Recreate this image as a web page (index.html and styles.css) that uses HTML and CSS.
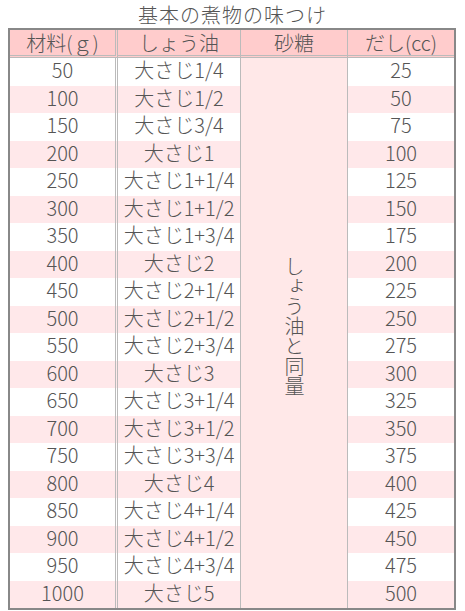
FILE: index.html
```html
<!DOCTYPE html>
<html lang="ja">
<head>
<meta charset="utf-8">
<title>基本の煮物の味つけ</title>
<link rel="stylesheet" href="styles.css">
</head>
<body>
<div class="title">基本の煮物の味つけ</div>
<table class="recipe">
  <colgroup>
    <col class="c1"><col class="c2"><col class="c3"><col class="c4">
  </colgroup>
  <thead>
    <tr><th class="k1">材料(ｇ)</th><th class="k2">しょう油</th><th class="k3">砂糖</th><th class="k4">だし(cc)</th></tr>
  </thead>
  <tbody>
    <tr><td class="k1">50</td><td class="k2">大さじ1/4</td><td class="k3 sugar" rowspan="20"><span class="vert">しょう油と同量</span></td><td class="k4">25</td></tr>
    <tr class="alt"><td class="k1">100</td><td class="k2">大さじ1/2</td><td class="k4">50</td></tr>
    <tr><td class="k1">150</td><td class="k2">大さじ3/4</td><td class="k4">75</td></tr>
    <tr class="alt"><td class="k1">200</td><td class="k2">大さじ1</td><td class="k4">100</td></tr>
    <tr><td class="k1">250</td><td class="k2">大さじ1+1/4</td><td class="k4">125</td></tr>
    <tr class="alt"><td class="k1">300</td><td class="k2">大さじ1+1/2</td><td class="k4">150</td></tr>
    <tr><td class="k1">350</td><td class="k2">大さじ1+3/4</td><td class="k4">175</td></tr>
    <tr class="alt"><td class="k1">400</td><td class="k2">大さじ2</td><td class="k4">200</td></tr>
    <tr><td class="k1">450</td><td class="k2">大さじ2+1/4</td><td class="k4">225</td></tr>
    <tr class="alt"><td class="k1">500</td><td class="k2">大さじ2+1/2</td><td class="k4">250</td></tr>
    <tr><td class="k1">550</td><td class="k2">大さじ2+3/4</td><td class="k4">275</td></tr>
    <tr class="alt"><td class="k1">600</td><td class="k2">大さじ3</td><td class="k4">300</td></tr>
    <tr><td class="k1">650</td><td class="k2">大さじ3+1/4</td><td class="k4">325</td></tr>
    <tr class="alt"><td class="k1">700</td><td class="k2">大さじ3+1/2</td><td class="k4">350</td></tr>
    <tr><td class="k1">750</td><td class="k2">大さじ3+3/4</td><td class="k4">375</td></tr>
    <tr class="alt"><td class="k1">800</td><td class="k2">大さじ4</td><td class="k4">400</td></tr>
    <tr><td class="k1">850</td><td class="k2">大さじ4+1/4</td><td class="k4">425</td></tr>
    <tr class="alt"><td class="k1">900</td><td class="k2">大さじ4+1/2</td><td class="k4">450</td></tr>
    <tr><td class="k1">950</td><td class="k2">大さじ4+3/4</td><td class="k4">475</td></tr>
    <tr class="alt"><td class="k1">1000</td><td class="k2">大さじ5</td><td class="k4">500</td></tr>
  </tbody>
</table>
</body>
</html>
```
FILE: styles.css
```css
html, body {
  margin: 0;
  padding: 0;
  background: #ffffff;
}
body {
  font-family: "Noto Sans CJK JP", "Noto Sans", sans-serif;
  font-weight: 300;
  color: #555555;
}
.title {
  height: 28px;
  box-sizing: border-box;
  padding-top: 2px;
  line-height: 26px;
  font-size: 20px;
  font-weight: 300;
  text-align: center;
  letter-spacing: 1px;
}
.recipe {
  margin-left: 8px;
  width: 448px;
  table-layout: fixed;
  border-collapse: separate;
  border-spacing: 0;
  border: 2px solid #888888;
  font-size: 20px;
}
.c1 { width: 108px; }
.c2 { width: 123px; }
.c3 { width: 107px; }
.c4 { width: 106px; }
.recipe th, .recipe td {
  padding: 0;
  text-align: center;
  white-space: nowrap;
  font-weight: 300;
  box-sizing: border-box;
}
.recipe th {
  height: 28px;
  line-height: 24px;
  background: #ffcccc;
  border-bottom: 3px double #bbbbbb;
}
.recipe td {
  height: 27.5px;
  line-height: 22px;
  padding-bottom: 3px;
}
.k1 { border-right: 3px double #bbbbbb; }
.k2 { border-right: 1px solid #bbbbbb; }
.k3 { border-right: 1px solid #bbbbbb; }
.alt td { background: #ffe8ea; }
.recipe td.sugar {
  background: #ffe8e8;
  vertical-align: middle;
  padding-bottom: 0;
}
.vert {
  display: inline-block;
  writing-mode: vertical-rl;
  line-height: 20px;
  margin-top: -12px;
}
```
